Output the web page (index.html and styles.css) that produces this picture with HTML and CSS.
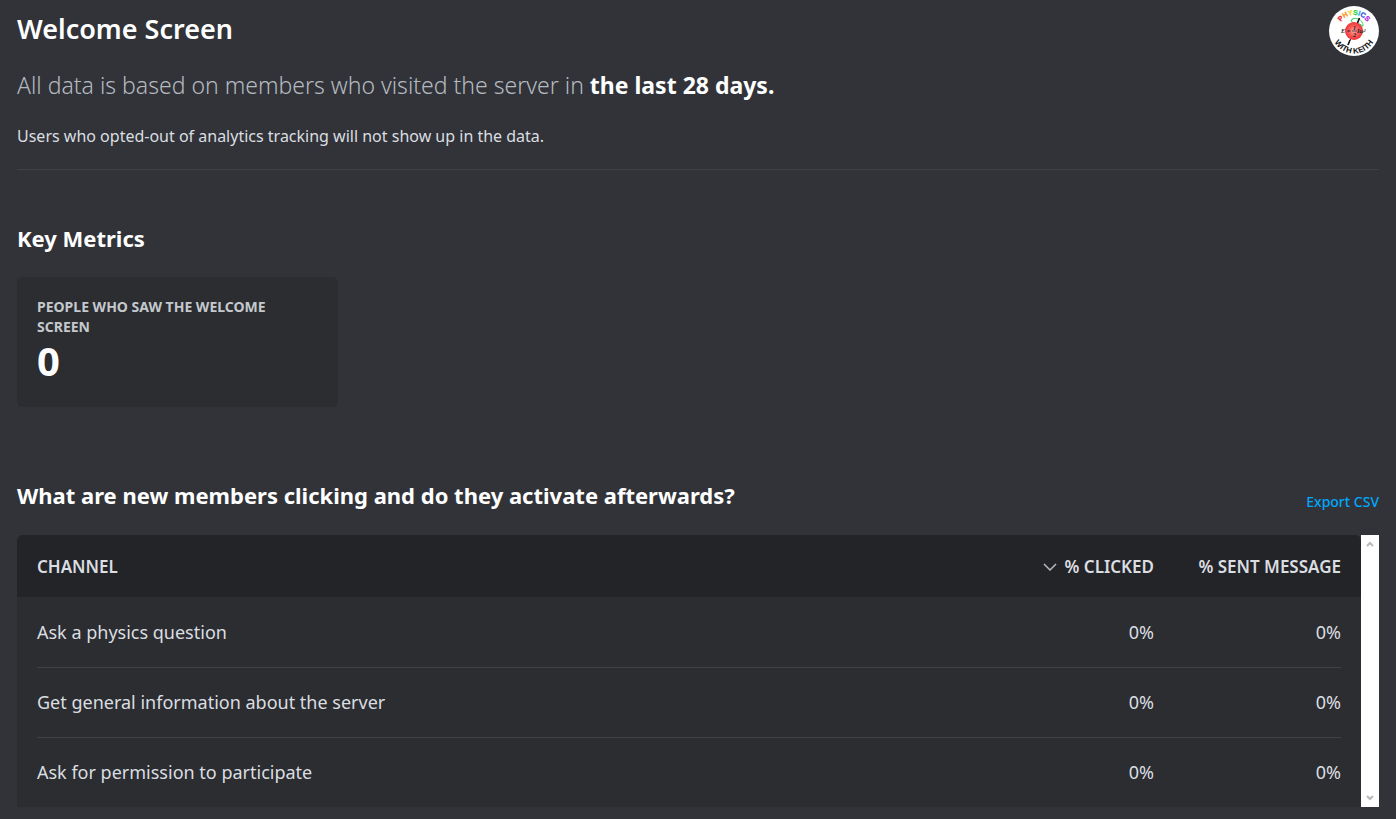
FILE: index.html
```html
<!DOCTYPE html>
<html lang="en">
<head>
<meta charset="utf-8">
<title>Welcome Screen</title>
<link rel="stylesheet" href="styles.css">
</head>
<body>
<main class="page">
  <header class="page-header">
    <div class="title-row">
      <h1 class="title">Welcome Screen</h1>
      <svg class="avatar" viewBox="0 0 50 50" role="img" aria-label="Physics with Keith">
        <defs>
          <path id="arc-top" d="M9 25A16 16 0 0 1 41 25"/>
          <path id="arc-bottom" d="M2.500 25A22.500 22.500 0 0 0 47.500 25"/>
          <radialGradient id="ball"><stop offset="0" stop-color="#ffb0aa"/><stop offset=".5" stop-color="#f9615c"/><stop offset="1" stop-color="#ee3338"/></radialGradient>
        </defs>
        <circle cx="25" cy="25" r="25" fill="#fff"/>
        <text class="avatar-text avatar-top"><textPath href="#arc-top" startOffset="50%" text-anchor="middle"><tspan fill="#f02a35" stroke="#f02a35">P</tspan><tspan fill="#ff9320" stroke="#ff9320">H</tspan><tspan fill="#f1d61e" stroke="#f1d61e">Y</tspan><tspan fill="#36d83e" stroke="#36d83e">S</tspan><tspan fill="#21aee9" stroke="#21aee9">I</tspan><tspan fill="#334de8" stroke="#334de8">C</tspan><tspan fill="#b52be0" stroke="#b52be0">S</tspan></textPath></text>
        <path d="M22 15c0-4 9-3 11 1s1 5-1 4M25 12l-3 3 3 2M29 17l5 3" fill="none" stroke="#42d56a" stroke-width="1"/>
        <path d="M30.500 12L19 39" stroke="#222" stroke-width="1"/>
        <circle cx="25" cy="25" r="9" fill="url(#ball)"/>
        <path d="M30.500 12l-2 5M21 34l-2 5" stroke="#111" stroke-width="1.500"/>
        <text class="avatar-formula" x="12" y="27">E</text>
        <text class="avatar-formula" x="18" y="27">=</text>
        <text class="avatar-formula" x="24" y="24">1</text>
        <path d="M23 25h5" stroke="#222" stroke-width=".7"/>
        <text class="avatar-formula" x="24" y="31">2</text>
        <text class="avatar-formula" x="28" y="27">Iω²</text>
        <text class="avatar-text" fill="#111"><textPath href="#arc-bottom" startOffset="50%" text-anchor="middle">WITH KEITH</textPath></text>
      </svg>
    </div>
    <p class="lead">All data is based on members who visited the server in <strong>the last 28 days.</strong></p>
    <p class="note">Users who opted-out of analytics tracking will not show up in the data.</p>
  </header>

  <section class="metrics">
    <h2 class="heading">Key Metrics</h2>
    <div class="card">
      <h3 class="card-label">People who saw the welcome screen</h3>
      <p class="card-value">0</p>
    </div>
  </section>

  <section class="channels">
    <div class="section-row">
      <h2 class="heading">What are new members clicking and do they activate afterwards?</h2>
      <a class="export" href="#">Export CSV</a>
    </div>
    <div class="table-wrap">
      <table class="table">
        <thead>
          <tr>
            <th scope="col">Channel</th>
            <th scope="col" class="clicked"><button class="sort" type="button"><svg class="chevron" viewBox="0 0 14 8" aria-hidden="true"><path d="M1 1l6 6 6-6"/></svg>% Clicked</button></th>
            <th scope="col" class="sent">% Sent Message</th>
          </tr>
        </thead>
        <tbody>
          <tr><td>Ask a physics question</td><td class="clicked">0%</td><td class="sent">0%</td></tr>
          <tr><td>Get general information about the server</td><td class="clicked">0%</td><td class="sent">0%</td></tr>
          <tr><td>Ask for permission to participate</td><td class="clicked">0%</td><td class="sent">0%</td></tr>
        </tbody>
      </table>
      <div class="scrollbar">
        <button type="button" class="scroll-button" aria-label="Scroll up"><svg viewBox="0 0 8 6"><path d="M1 5l3-3 3 3"/></svg></button>
        <button type="button" class="scroll-button" aria-label="Scroll down"><svg viewBox="0 0 8 6"><path d="M1 1l3 3 3-3"/></svg></button>
      </div>
    </div>
  </section>
</main>
</body>
</html>
```
FILE: styles.css
```css
* { box-sizing: border-box; }
body {
  margin: 0;
  background: #313338;
  color: #dbdee1;
  font-family: "Noto Sans", "Open Sans", sans-serif;
}
h1, h2, h3, p { margin: 0; }
.page { padding: 6px 17px 12px; }
.page-header {
  border-bottom: 1px solid #3f4147;
  padding-bottom: 20px;
}
.title-row {
  display: flex;
  justify-content: space-between;
  align-items: flex-start;
}
.title { color: #fff; font-size: 27px; line-height: 46px; font-weight: 600; }
.avatar { width: 50px; height: 50px; flex: none; }
.avatar-text { font: 700 8px "Liberation Sans", sans-serif; stroke-width: 0.3; }
.avatar-top { font-size: 7px; }
.avatar-formula { font: italic 700 6px "Liberation Serif", serif; fill: #222; }
.lead { margin-top: 13px; color: #b5bac1; font-size: 23px; line-height: 32px; font-weight: 300; }
.lead strong { color: #fff; font-weight: 700; }
.note { margin-top: 22px; font-size: 16px; line-height: 26px; }
.metrics { padding-top: 53px; }
.heading { color: #fff; font-size: 22px; line-height: 30px; font-weight: 700; }
.card {
  width: 321px;
  max-width: 100%;
  min-height: 130px;
  margin-top: 24px;
  padding: 20px;
  border-radius: 6px;
  background: #2b2d31;
}
.card-label { color: #c4c9ce; font-size: 14px; line-height: 20px; font-weight: 700; text-transform: uppercase; }
.card-value { color: #fff; font-size: 40px; line-height: 48px; font-weight: 700; }
.channels { padding-top: 73px; }
.section-row { display: flex; justify-content: space-between; align-items: flex-end; }
.export { color: #00a8fc; font-size: 14px; line-height: 16px; font-weight: 500; text-decoration: none; }
.table-wrap { display: flex; margin-top: 25px; }
.table {
  flex: 1;
  border-collapse: collapse;
  border-radius: 6px 6px 0 0;
  overflow: hidden;
  background: #2b2d31;
}
.table th, .table td { padding: 0 20px; text-align: left; }
.table th {
  height: 62px;
  background: #232428;
  font-size: 17px;
  font-weight: 600;
  text-transform: uppercase;
}
.table td { height: 70px; font-size: 18px; }
.table .clicked, .table .sent { text-align: right; white-space: nowrap; }
.table .sent { width: 207px; }
.table .clicked { padding-right: 0; }
.table tbody tr:not(:first-child) {
  background: linear-gradient(#3f4147, #3f4147) no-repeat 20px 0 / calc(100% - 40px) 1px;
}
.sort {
  display: inline-flex;
  align-items: center;
  vertical-align: middle;
  gap: 8px;
  padding: 0;
  border: 0;
  background: none;
  color: inherit;
  font: inherit;
  text-transform: inherit;
}
.chevron { width: 14px; height: 8px; }
.chevron path { fill: none; stroke: #b5bac1; stroke-width: 1.5; }
.scrollbar {
  display: flex;
  flex-direction: column;
  justify-content: space-between;
  width: 18px;
  background: #fff;
}
.scroll-button { display: grid; place-items: center; height: 18px; padding: 0; border: 0; background: none; }
.scroll-button svg { width: 8px; height: 6px; }
.scroll-button path { fill: none; stroke: #b8b8b8; stroke-width: 2; }
```
